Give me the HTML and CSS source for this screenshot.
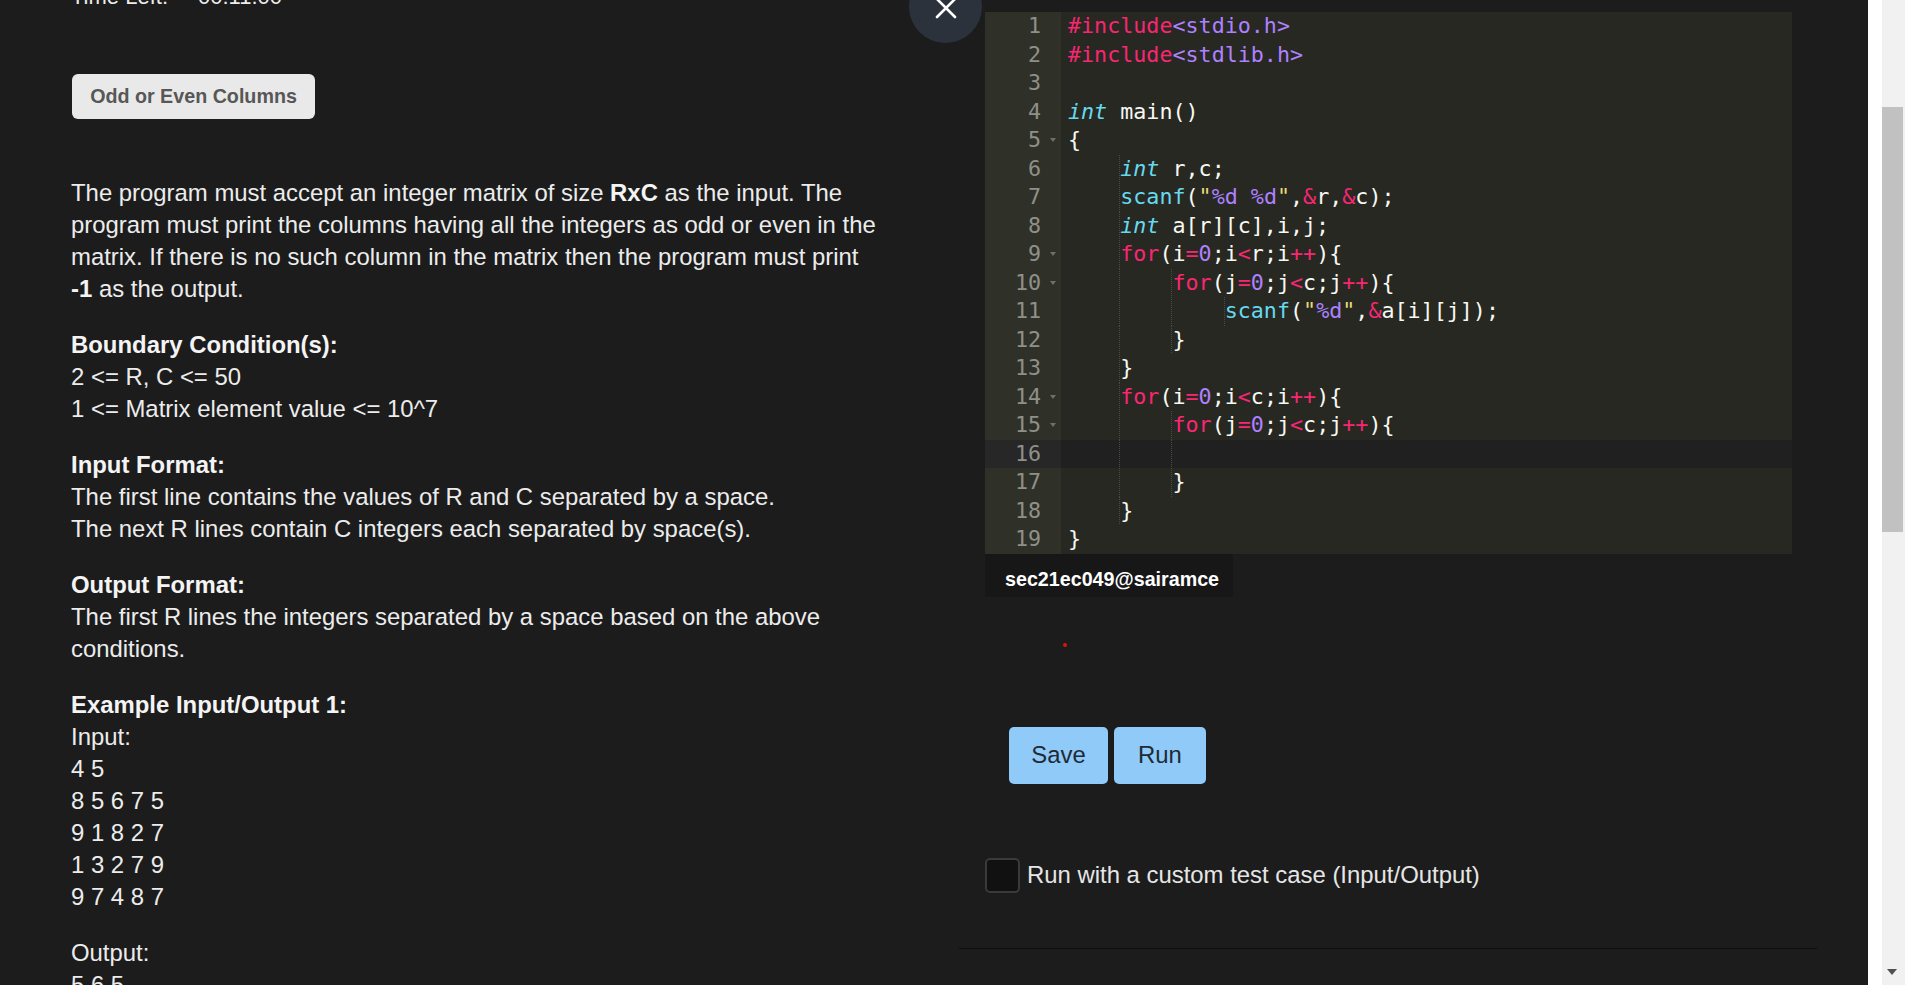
FILE: index.html
```html
<!DOCTYPE html>
<html lang="en">
<head>
<meta charset="utf-8">
<title>Odd or Even Columns</title>
<link rel="stylesheet" href="styles.css">
</head>
<body>
<div class="page">
  <div class="app">
    <section class="left">
      <div class="timer"><span>Time Left:</span><span class="time">00:11:00</span></div>
      <button class="title-btn">Odd or Even Columns</button>
      <div class="desc">
        <p>The program must accept an integer matrix of size <b>RxC</b> as the input. The program must print the columns having all the integers as odd or even in the matrix. If there is no such column in the matrix then the program must print <b>-1</b> as the output.</p>
        <p><b>Boundary Condition(s):</b><br>2 &lt;= R, C &lt;= 50<br>1 &lt;= Matrix element value &lt;= 10^7</p>
        <p><b>Input Format:</b><br>The first line contains the values of R and C separated by a space.<br>The next R lines contain C integers each separated by space(s).</p>
        <p><b>Output Format:</b><br>The first R lines the integers separated by a space based on the above conditions.</p>
        <p><b>Example Input/Output 1:</b><br>Input:<br>4 5<br>8 5 6 7 5<br>9 1 8 2 7<br>1 3 2 7 9<br>9 7 4 8 7</p>
        <p>Output:<br>5 6 5</p>
      </div>
    </section>

    <section class="card">
      <div class="editor">
        <div class="gutter">
          <div class="gcell">1</div>
          <div class="gcell">2</div>
          <div class="gcell">3</div>
          <div class="gcell">4</div>
          <div class="gcell fold">5</div>
          <div class="gcell">6</div>
          <div class="gcell">7</div>
          <div class="gcell">8</div>
          <div class="gcell fold">9</div>
          <div class="gcell fold">10</div>
          <div class="gcell">11</div>
          <div class="gcell">12</div>
          <div class="gcell">13</div>
          <div class="gcell fold">14</div>
          <div class="gcell fold">15</div>
          <div class="gcell active">16</div>
          <div class="gcell">17</div>
          <div class="gcell">18</div>
          <div class="gcell">19</div>
        </div>
        <div class="code">
<div class="line"><span class="kw">#include</span><span class="cn">&lt;stdio.h&gt;</span></div>
<div class="line"><span class="kw">#include</span><span class="cn">&lt;stdlib.h&gt;</span></div>
<div class="line"> </div>
<div class="line"><span class="ty">int</span> main()</div>
<div class="line">{</div>
<div class="line"><span class="ig">    </span><span class="ty">int</span> r,c;</div>
<div class="line"><span class="ig">    </span><span class="fn">scanf</span>(<span class="st">"</span><span class="cn">%d</span><span class="st"> </span><span class="cn">%d</span><span class="st">"</span>,<span class="kw">&amp;</span>r,<span class="kw">&amp;</span>c);</div>
<div class="line"><span class="ig">    </span><span class="ty">int</span> a[r][c],i,j;</div>
<div class="line"><span class="ig">    </span><span class="kw">for</span>(i<span class="kw">=</span><span class="cn">0</span>;i<span class="kw">&lt;</span>r;i<span class="kw">++</span>){</div>
<div class="line"><span class="ig">    </span><span class="ig">    </span><span class="kw">for</span>(j<span class="kw">=</span><span class="cn">0</span>;j<span class="kw">&lt;</span>c;j<span class="kw">++</span>){</div>
<div class="line"><span class="ig">    </span><span class="ig">    </span><span class="ig">    </span><span class="fn">scanf</span>(<span class="st">"</span><span class="cn">%d</span><span class="st">"</span>,<span class="kw">&amp;</span>a[i][j]);</div>
<div class="line"><span class="ig">    </span><span class="ig">    </span>}</div>
<div class="line"><span class="ig">    </span>}</div>
<div class="line"><span class="ig">    </span><span class="kw">for</span>(i<span class="kw">=</span><span class="cn">0</span>;i<span class="kw">&lt;</span>c;i<span class="kw">++</span>){</div>
<div class="line"><span class="ig">    </span><span class="ig">    </span><span class="kw">for</span>(j<span class="kw">=</span><span class="cn">0</span>;j<span class="kw">&lt;</span>c;j<span class="kw">++</span>){</div>
<div class="line active"><span class="ig">    </span><span class="ig">    </span></div>
<div class="line"><span class="ig">    </span><span class="ig">    </span>}</div>
<div class="line"><span class="ig">    </span>}</div>
<div class="line">}</div>
        </div>
      </div>
      <div class="user">sec21ec049@sairamce</div>
      <div class="dot"></div>
      <div class="actions">
        <button class="btn save">Save</button>
        <button class="btn run">Run</button>
      </div>
      <label class="custom"><span class="chk"></span><span>Run with a custom test case (Input/Output)</span></label>
    </section>

    <div class="close">
      <svg width="22" height="22" viewBox="0 0 22 22"><path d="M2 2 L20 20 M20 2 L2 20" stroke="#fff" stroke-width="2.6" stroke-linecap="round" fill="none"/></svg>
    </div>
  </div>
  <div class="sbarea">
    <div class="sb">
      <div class="thumb"></div>
      <div class="down"></div>
    </div>
  </div>
</div>
</body>
</html>
```

FILE: styles.css
```css
* { box-sizing: border-box; }
html, body { margin: 0; height: 100%; }
body {
  background: #fff;
  font-family: "Liberation Sans", Arial, sans-serif;
  overflow: hidden;
}
.page { display: flex; height: 985px; }
.app {
  width: 1868px;
  flex: none;
  background: #1c1c1c;
  color: #ececec;
  display: flex;
  position: relative;
  overflow: hidden;
}

/* left column */
.left { width: 959px; flex: none; padding-left: 71px; }
.timer {
  margin-top: -19px;
  height: 32px;
  font-size: 22px;
  line-height: 32px;
  display: flex;
}
.timer .time { margin-left: 30px; }
.title-btn {
  display: block;
  margin: 61px 0 0 1px;
  width: 243px;
  height: 45px;
  padding: 0;
  border: 0;
  border-radius: 6px;
  background: #e9e9e9;
  color: #575757;
  font: bold 19.7px "Liberation Sans", Arial, sans-serif;
}
.desc {
  margin-top: 58px;
  width: 814px;
  font-size: 23.9px;
  line-height: 32px;
}
.desc p { margin: 0 0 24px; }
.desc b { color: #f4f4f4; }

/* right card */
.card {
  width: 858px;
  flex: none;
  height: 949px;
  border-bottom: 1px solid #0e0e0e;
  padding: 12px 25px 0 26px;
}
.editor {
  display: flex;
  width: 807px;
  height: 541.5px;
  background: #272822;
  font-family: "DejaVu Sans Mono", "Liberation Mono", monospace;
  font-size: 21.7px;
}
.gutter { width: 76px; flex: none; background: #2f3129; color: #8f908a; }
.gcell {
  height: 28.5px;
  line-height: 28.5px;
  text-align: right;
  padding-right: 20px;
  position: relative;
}
.gcell.active { background: #272727; }
.fold::after {
  content: "";
  position: absolute;
  right: 5px;
  top: 12px;
  border-left: 3.5px solid transparent;
  border-right: 3.5px solid transparent;
  border-top: 4px solid #6f7069;
}
.code { flex: 1; color: #f8f8f2; }
.line {
  height: 28.5px;
  line-height: 28.5px;
  white-space: pre;
  padding-left: 7px;
}
.line.active { background: #202020; }
.ig {
  display: inline-block;
  height: 28.5px;
  vertical-align: top;
  background-image: linear-gradient(#4b4c46 50%, transparent 50%);
  background-size: 1px 2px;
  background-position: right top;
  background-repeat: repeat-y;
}
.kw { color: #f92672; }
.cn { color: #ae81ff; }
.ty { color: #66d9ef; font-style: italic; }
.fn { color: #66d9ef; }
.st { color: #e6db74; }

.user {
  width: 248px;
  height: 43px;
  background: #171717;
  color: #fff;
  font: bold 19.7px "Liberation Sans", Arial, sans-serif;
  line-height: 51px;
  padding-left: 20px;
}
.dot {
  width: 4px;
  height: 4px;
  border-radius: 50%;
  background: #e01010;
  margin: 46px 0 0 78px;
}
.actions { display: flex; gap: 6px; margin: 80px 0 0 24px; }
.btn {
  height: 57px;
  padding: 0;
  border: 0;
  border-radius: 5px;
  background: #90caf9;
  color: #1f2a36;
  font: 23.9px "Liberation Sans", Arial, sans-serif;
}
.save { width: 99px; }
.run { width: 92px; }
.custom {
  display: flex;
  align-items: center;
  gap: 7px;
  margin-top: 74px;
  font-size: 23.9px;
  color: #e6e6e6;
}
.chk {
  width: 35px;
  height: 35px;
  background: #111;
  border: 2px solid #3a3a3a;
  border-radius: 5px;
}

/* close button overlay */
.close {
  position: absolute;
  left: 909px;
  top: -30px;
  width: 73px;
  height: 73px;
  border-radius: 50%;
  background: #2b323c;
  display: flex;
  align-items: center;
  justify-content: center;
  padding-top: 3px;
}

/* scrollbar */
.sbarea { flex: 1; display: flex; justify-content: flex-end; background: #fff; }
.sb {
  width: 23px;
  background: #f1f1f1;
  display: flex;
  flex-direction: column;
  align-items: flex-start;
}
.thumb { margin-top: 107px; width: 21px; height: 425px; background: #c1c1c1; }
.down {
  margin-top: auto;
  margin-bottom: 10px;
  margin-left: 5px;
  border-left: 5px solid transparent;
  border-right: 5px solid transparent;
  border-top: 6px solid #505050;
}
```
